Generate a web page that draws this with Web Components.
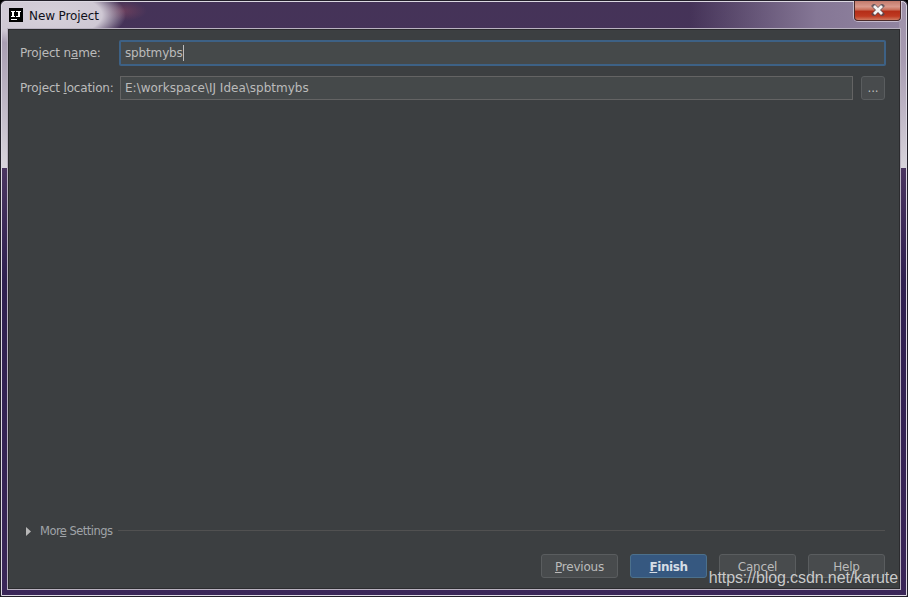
<!DOCTYPE html>
<html><head><meta charset="utf-8">
<style>
html,body{margin:0;padding:0;background:#000;}
body{width:908px;height:597px;overflow:hidden;font-family:"DejaVu Sans",sans-serif;}
</style></head>
<body>
<template id="t-window">
<style>
:host{display:flex;flex-direction:column;position:relative;width:908px;height:597px;box-sizing:border-box;overflow:hidden;border-radius:6px 6px 0 0;
 border:1px solid #23202a;
 background:
  radial-gradient(ellipse 80px 32px at 45px 14px,#d6d0da 0%,#cfc8d4 70%,rgba(140,120,155,0) 100%) no-repeat,
  radial-gradient(ellipse 24px 10px at 122px 10px,rgba(160,80,100,.4) 0%,rgba(160,80,100,0) 100%) no-repeat,
  linear-gradient(180deg,#9c8fa8 0,#b0a6b8 60px,#d8d4dc 167px,rgba(0,0,0,0) 167px) no-repeat left top/8px 100%,
  linear-gradient(180deg,#9c8fa8 0,#a89cb2 60px,#d8d4dc 167px,rgba(0,0,0,0) 167px) no-repeat right top/8px 100%,
  linear-gradient(90deg,rgba(0,0,0,0) 76%,rgba(140,126,156,.9) 90%,rgba(150,138,165,.95) 100%) no-repeat left top/100% 28px,
  linear-gradient(180deg,#453358 0,#46325c 167px,#4a3560 168px,#2f2050 280px,#3a2658 100%);}
.frame{flex:1;display:flex;flex-direction:column;min-height:0;border:1px solid #dcd8e2;border-radius:5px 5px 0 0;padding:0 5px 5px 5px;}
.bar{height:26px;flex:none;display:flex;align-items:center;}
.panel{flex:1;min-height:0;display:flex;flex-direction:column;background:#3c3f41;border:1px solid #b9b2c0;box-shadow:inset 0 0 0 1px #2b2b2e;}
</style>
<div class="frame">
<div class="bar"><slot name="title"></slot></div>
<div class="panel"><slot></slot></div>
</div>
<slot name="over"></slot>
</template>

<template id="t-title">
<style>
:host{display:flex;align-items:center;gap:6px;padding:1px 0 0 2px;flex:1;font:12px "DejaVu Sans",sans-serif;color:#10101a;}
.logo{width:14px;height:14px;background:#000;display:block;margin-top:-2px}
svg{display:block}
.t{letter-spacing:-.1px}
</style>
<span class="logo"><svg width="14" height="14" viewBox="0 0 14 14" shape-rendering="crispEdges"><path d="M2 3h4v1H5v4h1v1H2V8h1V4H2zM7 3h5v1h-1v4l-1 1H7V8h2V4H7z" fill="#fff"/><rect x="2" y="11" width="6" height="1" fill="#fff"/></svg></span>
<span class="t"><slot></slot></span>
</template>

<template id="t-close">
<style>
:host{display:flex;position:absolute;top:0;right:6px;width:47px;height:20px;box-sizing:border-box;align-items:center;justify-content:center;
 border:1px solid #4a2a2a;border-top:none;border-radius:0 0 4px 4px;box-shadow:0 0 0 1px rgba(235,225,235,.6);
 background:linear-gradient(180deg,#c27a6c 0,#d9998c 30%,#c9705c 45%,#b52e18 55%,#bf3a22 80%,#cf7a60 100%);}
svg{display:block;margin-bottom:1px}
</style>
<svg width="14" height="12" viewBox="0 0 14 12"><path d="M3 2l8 8M11 2l-8 8" stroke="#4a4a55" stroke-width="4.200" stroke-linecap="square" fill="none" opacity=".75"/><path d="M3 2l8 8M11 2l-8 8" stroke="#f4f4f4" stroke-width="2.800" fill="none"/></svg>
</template>

<template id="t-row">
<style>
:host{display:flex;align-items:center;gap:8px;}
.l{flex:none;width:92px;font:12px "DejaVu Sans",sans-serif;color:#bbbbbb;white-space:nowrap;letter-spacing:-.17px}
.f{flex:1;display:flex;gap:8px;align-items:center;min-width:0}
</style>
<span class="l"><slot name="label"></slot></span>
<span class="f"><slot></slot></span>
</template>

<template id="t-input">
<style>
:host{display:flex;flex:1;box-sizing:border-box;height:24px;align-items:center;padding:0 4px;background:#45494a;border:1px solid #646464;font:12px "DejaVu Sans",sans-serif;color:#bbbbbb;white-space:nowrap;letter-spacing:0;min-width:0}
:host([focused]){height:26px;margin:0 -1px;border:none;padding:0 6px;background:#45494a;outline:none;box-shadow:inset 0 0 0 2px #3d6185;border-radius:2px;letter-spacing:-.15px}
.c{display:none;width:1px;height:16px;background:#bbbbbb;margin-left:0}
:host([focused]) .c{display:block}
</style>
<slot></slot><span class="c"></span>
</template>

<template id="t-button">
<style>
:host{display:flex;flex:none;box-sizing:border-box;width:77px;height:24px;align-items:center;justify-content:center;padding-top:1px;background:#484b4d;border:1px solid #5a5d5f;border-radius:3px;font:12px "DejaVu Sans",sans-serif;color:#bbbbbb;letter-spacing:-.2px}
:host([primary]){background:#365880;border-color:#4c708c;color:#d6dde5;font-weight:bold;letter-spacing:-.45px}
:host([small]){width:24px;padding-top:0;}
</style>
<slot></slot>
</template>

<template id="t-more">
<style>
:host{display:flex;align-items:center;gap:6px;font:11.5px "DejaVu Sans",sans-serif;color:#a0a4a8;letter-spacing:-.53px;}
svg{flex:none;margin-left:6px;margin-right:3px}
.line{flex:1;height:1px;background:#515151;margin-top:-1px}
</style>
<svg width="5" height="9" viewBox="0 0 5 9"><path d="M0 0l5 4.500L0 9z" fill="#b8b8b8"/></svg>
<span><slot></slot></span><span class="line"></span>
</template>

<template id="t-form">
<style>
:host{display:flex;flex-direction:column;flex:1;min-height:0;padding:11px 15px 11px 12px;box-sizing:border-box;}
.top{display:flex;flex-direction:column;flex:1}
.foot{display:flex;flex-direction:column;gap:16px}
</style>
<div class="top"><slot name="fields"></slot></div>
<div class="foot"><slot name="more"></slot><slot name="buttons"></slot></div>
</template>

<template id="t-fields">
<style>:host{display:flex;flex-direction:column;gap:10px}</style><slot></slot>
</template>

<template id="t-btns">
<style>:host{display:flex;justify-content:flex-end;gap:12px}</style><slot></slot>
</template>

<template id="t-watermark">
<style>
:host{position:absolute;right:9px;bottom:9px;font:16px "Liberation Sans",Arial,sans-serif;letter-spacing:-.1px;color:rgba(222,222,222,.88);white-space:nowrap;}
</style><slot></slot>
</template>

<ide-window>
  <ide-title slot="title">New Project</ide-title>
  <ide-form>
    <ide-fields slot="fields">
      <ide-row><span slot="label">Project n<u>a</u>me:</span><ide-input focused>spbtmybs</ide-input></ide-row>
      <ide-row><span slot="label">Project <u>l</u>ocation:</span><ide-input>E:\workspace\IJ Idea\spbtmybs</ide-input><ide-button small>...</ide-button></ide-row>
    </ide-fields>
    <ide-more slot="more">Mor<u>e</u> Settings</ide-more>
    <ide-btns slot="buttons">
      <ide-button><span><u>P</u>revious</span></ide-button>
      <ide-button primary><span><u>F</u>inish</span></ide-button>
      <ide-button>Cancel</ide-button>
      <ide-button>Help</ide-button>
    </ide-btns>
  </ide-form>
  <ide-close slot="over"></ide-close>
  <ide-watermark slot="over">https://blog.csdn.net/karute</ide-watermark>
</ide-window>

<script>
const map={'ide-window':'t-window','ide-title':'t-title','ide-close':'t-close','ide-row':'t-row','ide-input':'t-input','ide-button':'t-button','ide-more':'t-more','ide-form':'t-form','ide-fields':'t-fields','ide-btns':'t-btns','ide-watermark':'t-watermark'};
for(const [n,id] of Object.entries(map)){
  customElements.define(n,class extends HTMLElement{
    constructor(){super();this.attachShadow({mode:'open'}).appendChild(document.getElementById(id).content.cloneNode(true));}
  });
}
</script>
</body></html>
